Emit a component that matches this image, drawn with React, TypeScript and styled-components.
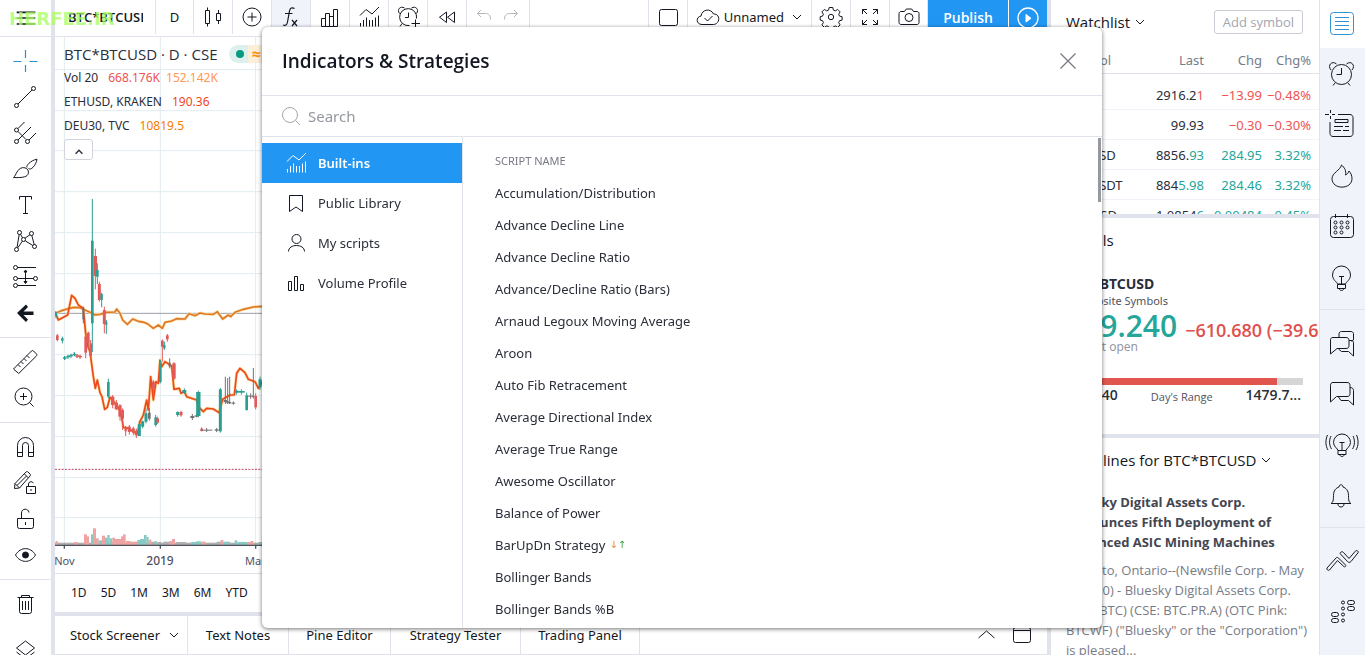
import React from "react";
import styled, { createGlobalStyle, css } from "styled-components";

const font = `"Noto Sans", "Open Sans", "Liberation Sans", sans-serif`;
const headFont = `"Open Sans", "Noto Sans", "Liberation Sans", sans-serif`;
const c = {
  ink: "#131722",
  text: "#2a2e39",
  muted: "#787b86",
  line: "#e0e3eb",
  blue: "#2196f3",
  up: "#26a69a",
  down: "#ef5350",
  rail: "#f0f3fa",
};

const GlobalStyle = createGlobalStyle`
  *, *::before, *::after { box-sizing: border-box; }
  html, body, #root { height: 100%; }
  body { margin: 0; overflow: hidden; background: #fff; color: ${c.text}; font: 13px/20px ${font}; }
  button, input { font: inherit; color: inherit; border: 0; background: none; padding: 0; margin: 0; }
  button { cursor: pointer; }
  h2, h3, p, ul { margin: 0; padding: 0; font-weight: 400; }
  ul { list-style: none; }
`;

/* ---------- icons ---------- */

const Svg = styled.svg.attrs({ viewBox: "0 0 28 28", "aria-hidden": true })<{ $size?: number }>`
  display: block;
  flex: none;
  width: ${(p) => p.$size ?? 28}px;
  height: ${(p) => p.$size ?? 28}px;
  fill: none;
  stroke: currentColor;
  stroke-width: 1;
`;

const icons = {
  menu: <path strokeWidth="1.8" d="M4 8h20M4 14h20M4 20.500h20" />,
  cross: <path stroke="#2a8fd0" strokeWidth="1.200" d="M14.500 3v8M14.500 18v7M2.500 14.500h8M18.500 14.500h8" />,
  trend: (
    <>
      <circle cx="5.500" cy="22.500" r="2" />
      <circle cx="22.500" cy="5.500" r="2" />
      <path d="M7 21 21 7" />
    </>
  ),
  fork: (
    <>
      <circle cx="5.500" cy="11" r="2" />
      <circle cx="5.500" cy="22.500" r="2" />
      <circle cx="16.500" cy="22.500" r="2" />
      <path d="M7 9.500 13.500 3M7 21 20 8M18 21l7-7M7 12.500l8 8" />
    </>
  ),
  brush: (
    <path d="M2.500 22.500C5.500 20 6 13.500 11.500 12.700c3.800-.5 6.600 2.300 5.800 5.600-.8 3.600-5 4.600-14.800 4.200zM16 12.500c-.5-1 .2-2.500 1.700-4C20 6.500 22.500 4.800 26 4.200M17.500 13.500c1 1 3 .5 4.500-1.200 2-2 3.500-5 4-8" />
  ),
  text: <path d="M8.500 8.500v-3h12v3M14.500 5.500v17M12 22.500h5" />,
  pattern: (
    <>
      <circle cx="8.500" cy="5.500" r="2" />
      <circle cx="20.500" cy="6.500" r="2" />
      <circle cx="12.500" cy="12.500" r="2" />
      <circle cx="5.500" cy="22.500" r="2" />
      <circle cx="23.500" cy="19.500" r="2" />
      <path d="M8.200 7.500 6 20.500M9.500 7.200l2 3.600M14 11.200l5-3.500M11.300 14.200 6.800 20.800M14.200 13.800l7.700 4.700M20.800 8.500l2.400 9" />
    </>
  ),
  forecast: (
    <>
      <circle cx="4.500" cy="4.500" r="2" />
      <circle cx="4.500" cy="15.500" r="2" />
      <circle cx="24.500" cy="15.500" r="2" />
      <circle cx="4.500" cy="22.500" r="2" />
      <path d="M6.500 4.500H25M6.500 15.500h16M6.500 22.500H25M14.500 8v12" />
      <path fill="currentColor" d="m13 9 1.500-2 1.500 2zM13 18.500l1.500 2 1.500-2z" />
    </>
  ),
  back: <path stroke="none" fill="currentColor" d="m6 14 9-8.500 2 2.500-4.500 4.500h10v3.500h-10L17 20.500 15 23z" />,
  ruler: <path d="M2.500 21 20.500 3c.7-.7 1.500-.7 2 0l3 3c.5.5.5 1.200 0 1.900L7.700 25.500zM7 16.500l2.500 2.500M10 13.500l2.500 2.500M13 10.500l2.500 2.500M16 7.500l2.500 2.500" />,
  zoom: (
    <>
      <circle cx="12.500" cy="12.500" r="8.500" />
      <path d="m18.500 18.500 4 4M12.500 9v7M9 12.500h7" />
    </>
  ),
  magnet: <path d="M6.500 23.500v-11a8 8 0 0 1 16 0v11h-5v-11a3 3 0 0 0-6 0v11zM6.500 19.500h5M17.500 19.500h5" />,
  pencil: (
    <>
      <path d="m3.500 19.500.5-5L15 3c.6-.6 1.300-.6 2 0l2 2c.6.600.600 1.300 0 2L8.500 19zM4 14.500 8.500 19M13.500 5l4 4M6 16.500 15.500 7" />
      <path d="M15.500 17.500h9v7h-9zM17.500 17.500V15a2.500 2.500 0 0 1 4.800-.8M20 20v2" />
    </>
  ),
  lock: <path d="M6.500 13.500h16v8a2 2 0 0 1-2 2h-12a2 2 0 0 1-2-2zM10.500 13.500V8c0-5 7-5 7.500-.5M14.500 17v3" />,
  eye: (
    <>
      <path d="M4.500 14c5-8.500 15-8.500 20 0-5 8.500-15 8.500-20 0z" />
      <circle cx="14.500" cy="14" r="3" fill="currentColor" />
    </>
  ),
  trash: <path d="M8.500 7.500h12v14a2 2 0 0 1-2 2h-8a2 2 0 0 1-2-2zM6.500 7.500h16M10.500 7V5.500h8V7M11.500 11v9M14.500 11v9M17.500 11v9" />,
  layers: <path d="m14.500 6 9 7-9 7-9-7zM5.500 17l9 7 9-7" />,
  candles: <path d="M6.500 7.500h4v13h-4zM8.500 4.500v3M8.500 20.500v3M17.500 10.500h4v7h-4zM19.500 7v3.500M19.500 17.500V21" />,
  plus: (
    <>
      <circle cx="14" cy="14" r="9" />
      <path d="M14 9.500v9M9.500 14h9" />
    </>
  ),
  fx: <path strokeWidth="1.200" d="M17.500 5.500c-2.500-1.500-4.500-.5-5 2.500l-2 11c-.5 3-2 4-4.500 3M8 10.500h7.500M15 17l5 6M20 17l-5 6" />,
  bars: <path d="M5.500 15.500h4v8h-4zM9.500 10.500h4v13h-4zM13.500 13.500h4v10h-4zM17.500 6.500h4v17h-4z" />,
  indicator: (
    <path d="m5 12.500 6-6 6 4.500 7-7M5.500 20v3.500M8.500 17v6.500M11.500 14.500v9M14.500 17v6.500M17.500 17v6.500M20.500 14.500v9M23.500 12.500v11" />
  ),
  alarmPlus: (
    <path d="M22.500 15.500a8.500 8.500 0 1 0-7 7M14.500 9.500v5H11M5.500 10.500c-3-4 1-8 5-5.500M22.500 10.500c3-4-1-8-5-5.500M17.500 20.500h8.500M21.500 16.500v8M8 20.500l-2 3" />
  ),
  replay: <path d="M13.500 9v10.500L6.500 14.200zM21.500 9v10.500l-7-5.300z" />,
  undo: <path d="M7.500 10.500h8c3.500 0 5 2 5 6M11 7l-3.500 3.500L11 14" />,
  redo: <path d="M19.500 10.500h-8c-3.500 0-5 2-5 6M16 7l3.500 3.500L16 14" />,
  frame: <rect x="5.500" y="6.500" width="18" height="16" rx="2" />,
  cloud: <path d="M8 21.500c-6 0-6.500-7.500-1-8.500C8 6 17 5 19.500 11c7-.5 7 10 0 10.500zM10.500 15l3 3 5-5" />,
  chevron: <path d="m10 12 4 4 4-4" />,
  gear: (
    <>
      <circle cx="14" cy="14" r="2.700" />
      <path d="M12.200 4.500h3.600l.6 2.600 1.900.8 2.300-1.500 2.500 2.500-1.400 2.300.8 1.900 2.600.6v3.400l-2.600.6-.8 1.900 1.400 2.300-2.500 2.500-2.300-1.400-1.900.8-.6 2.400h-3.600l-.6-2.500-1.900-.8-2.300 1.500-2.500-2.500 1.500-2.300-.8-1.900-2.400-.6v-3.400l2.400-.6.8-1.900-1.500-2.300 2.500-2.500 2.300 1.500 1.900-.8z" />
    </>
  ),
  full: <path d="M6.500 11V6.500H11M6.500 6.500l4.500 4.500M17 6.500h4.500V11M21.500 6.500 17 11M6.500 17v4.500H11M6.500 21.500 11 17M17 21.500h4.500V17M21.500 21.500 17 17" />,
  camera: (
    <>
      <path d="M6 8.500h3.500l1.800-2.500h5.400l1.800 2.500H22c1 0 2 .8 2 2v9c0 1.200-1 2-2 2H6c-1 0-2-.8-2-2v-9c0-1.200 1-2 2-2z" />
      <circle cx="14" cy="14.500" r="4" />
    </>
  ),
  play: (
    <>
      <circle cx="14" cy="14" r="10" strokeWidth="1.300" />
      <path fill="currentColor" d="M12 10.500v7.500l5-3.700z" />
    </>
  ),
  close: <path strokeWidth="1.300" stroke="#787b86" d="m6.500 6.500 15 15M21.500 6.500l-15 15" />,
  search: (
    <>
      <circle cx="13" cy="13" r="7.500" />
      <path d="m18.500 18.500 4.500 4.500" />
    </>
  ),
  bookmark: <path d="M7.500 6.500h13v16l-6.500-4.500-6.500 4.500z" />,
  user: (
    <>
      <circle cx="14.500" cy="10" r="4.500" />
      <path d="M6.500 22.500c0-8 16-8 16 0" />
    </>
  ),
  volume: <path d="M6.500 12.500h3v9h-3zM12.500 7.500h3v14h-3zM18.500 15.500h3v6h-3z" />,
  list: (
    <>
      <rect x="3.500" y="3.500" width="23" height="22" rx="3" />
      <path d="M8 8.500h14M8 12.500h14M8 16.500h14M8 20.500h14" />
    </>
  ),
  alarm: (
    <>
      <circle cx="14.500" cy="14.500" r="10" />
      <path d="M14.500 8v6.500h-5M4 10C0 5.500 5 0 9.500 4M25 10c4-4.500-1-10-5.500-6M8 23l-2 2.500M21 23l2 2.500" />
    </>
  ),
  notes: (
    <>
      <path d="M11 3.500h12c1.700 0 3 1.300 3 3v16c0 1.700-1.300 3-3 3H6c-1.700 0-3-1.300-3-3V11M-2 3.500h4M5 3.500h3M3.500-1v3M3.500 5v3" />
      <path d="M8 8.500h13v3H8zM7 15.500h9M18 15.500h4M7 19.500h7M16 19.500h6" />
    </>
  ),
  flame: <path d="M14.500 3c-1 5-9.500 8-9.500 13.500 0 11.500 20 11.500 20 0 0-3-1.500-6-3-7.500-.7 2-1.500 3-3.500 4 1-4-1-7.500-4-10z" />,
  calendar: (
    <>
      <rect x="3.500" y="3.500" width="23" height="21" rx="3" />
      <path d="M8.500 1v4M20.500 1v4" />
      {[9, 14, 19].map((y) =>
        [8.5, 14.5, 20.5].filter((x) => y < 19 || x < 20).map((x) => <circle key={`${x}-${y}`} cx={x} cy={y + 0.5} r="1.500" />),
      )}
    </>
  ),
  bulb: <path d="M10.500 20c-.3-2-5-4-5-9a9 9 0 0 1 18 0c0 5-4.700 7-5 9zM10.500 20.500h8v4h-8zM12.500 25c0 2 4 2 4 0M12 12.500h5M14.500 12.500V20" />,
  chats: (
    <path d="M12 8V5c0-1.500 1-2.500 2.500-2.500H24c1 0 2.500 1 2.500 2V10c0 1.500-1 2-2.500 2M6 8.500h13c2 0 3 1 3 3v5c0 2-1 3-3 3h-9L3.500 25V10.500c0-1 1-2 2.500-2zM22 11.500h2.500c1 0 2 1 2 2V27l-5-4.500h-7l-3-2.500" />
  ),
  chat: <path d="M6 2.500h14c2 0 3 1 3 3v8c0 2-1 3-3 3H9.500L3.500 22V5.500c0-2 1-3 2.500-3zM23 7.500c2 0 3.500 1 3.500 3V25l-5-4.500H14L11.500 17" />,
  bulbWave: (
    <path d="M11 19.500c-.3-2-4.500-4-4.500-8a8.500 8.500 0 0 1 17 0c0 4-4.200 6-4.500 8zM11 19.500h8v4h-8zM13 24c0 2 4 2 4 0M12.500 11.500h5M15 11.500v8M4 5c-2 4-2 9 .5 13M.5 4C-1.800 9-1.500 15 1 19M26 5c2 4 2 9-.5 13M29.500 4c2.300 5 2 11-.5 15" />
  ),
  bell: <path d="M4 21.500c2-1 2.500-3 2.500-8C6.500 8.500 9 6 12 5c0-3 4-3 4 0 3 1 5.500 3.500 5.500 8.500 0 5 .5 7 2.500 8zM11 22c0 4 6 4 6 0" />,
  zigzag: (
    <path d="m0 21 9-10c.7-.8 1.700-.8 2.500 0l7 7c1 1-.7 2.500-1.700 1.500L10.500 13.500 2.500 23C1.500 24-1 22.500 0 21zM13.500 5.500c1-1 2-1 3 0l5.500 6 6.500-7.500c1-1.500 3.500.5 2.500 1.800L24 14.500c-1 1.200-2.500 1.200-3.500 0l-7-7.500c-.5-.5-.5-1 0-1.500z" />
  ),
  dots: (
    <>
      <rect x="4.500" y="14.500" width="7" height="4" rx="2" />
      <rect x="4.500" y="20.500" width="7" height="4" rx="2" />
      <rect x="20.500" y="2.500" width="7" height="4" rx="2" />
      <rect x="20.500" y="8.500" width="7" height="4" rx="2" />
      <circle cx="16" cy="4.500" r="1.500" />
      <circle cx="16" cy="10.500" r="1.500" />
      <circle cx="16" cy="16.500" r="1.500" />
      <circle cx="16" cy="22.500" r="1.500" />
    </>
  ),
  up: <path d="m6.500 17 8-7 8 7" />,
  upSmall: <path strokeWidth="1.600" d="m10 16 4-4 4 4" />,
  window: <path d="M7.500 6.500h13a2 2 0 0 1 2 2v11a2 2 0 0 1-2 2h-13a2 2 0 0 1-2-2v-11a2 2 0 0 1 2-2zM5.500 9.500h17" />,
};
type IconName = keyof typeof icons;

const Icon = ({ name, size }: { name: IconName; size?: number }) => (
  <Svg $size={size} overflow="visible">
    {icons[name]}
  </Svg>
);

/* ---------- frame ---------- */

const Shell = styled.div`
  display: flex;
  height: 100vh;
  overflow: hidden;
`;

const Divider = styled.div`
  flex: 0 0 4px;
  background: ${c.line};
`;

const Main = styled.main`
  flex: 1;
  min-width: 0;
  display: flex;
  flex-direction: column;
`;

/* ---------- left toolbar ---------- */

const Tools = styled.nav`
  flex: 0 0 51px;
  display: flex;
  flex-direction: column;
  color: ${c.ink};
`;

const MenuButton = styled.button`
  flex: 0 0 37px;
  display: grid;
  place-items: center;
  border-bottom: 1px solid ${c.line};
`;

const ToolGroup = styled.div`
  padding: 6px 0;
  border-bottom: 1px solid ${c.line};
  &:last-child { border: 0; }
`;

const ToolButton = styled.button<{ $gap?: boolean }>`
  display: flex;
  align-items: center;
  justify-content: center;
  width: 100%;
  height: 36px;
  margin-top: ${(p) => (p.$gap ? 9 : 0)}px;
  padding-right: 2px;
`;

const toolGroups: [IconName, string][][] = [
  [["cross", "Cross"], ["trend", "Trend line"], ["fork", "Pitchfork"], ["brush", "Brush"], ["text", "Text"], ["pattern", "Patterns"], ["forecast", "Prediction"], ["back", "Hide"]],
  [["ruler", "Measure"], ["zoom", "Zoom in"]],
  [["magnet", "Magnet"], ["pencil", "Stay in drawing mode"], ["lock", "Lock drawings"], ["eye", "Hide drawings"]],
  [["trash", "Remove"], ["layers", "Object tree"]],
];

/* ---------- top bar ---------- */

const TopBar = styled.header`
  flex: 0 0 37px;
  display: flex;
  border-bottom: 1px solid ${c.line};
  color: ${c.ink};
`;

const TopButton = styled.button<{ $width?: number; $active?: boolean }>`
  flex: 0 0 ${(p) => p.$width ?? 39}px;
  height: 34px;
  display: flex;
  align-items: center;
  justify-content: center;
  border-right: 1px solid ${c.line};
  background: ${(p) => (p.$active ? c.rail : "none")};
`;

const SymbolButton = styled(TopButton)`
  justify-content: flex-start;
  padding-left: 13px;
  font-family: ${headFont};
  font-size: 13px;
  font-weight: 600;
  span { width: 75px; overflow: hidden; white-space: nowrap; text-align: left; }
`;

const History = styled.div`
  flex: 0 0 63px;
  display: flex;
  align-items: center;
  justify-content: center;
  height: 34px;
  color: #b2b5be;
  border-right: 1px solid ${c.line};
`;

const TopRight = styled.div`
  margin-left: auto;
  display: flex;
  border-left: 1px solid ${c.line};
`;

const LayoutButton = styled(TopButton)`
  justify-content: flex-start;
  gap: 2px;
  padding-left: 6px;
  svg:last-child { margin-left: -3px; }
`;

const Publish = styled.button<{ $width: number }>`
  width: ${(p) => p.$width}px;
  height: 36px;
  display: flex;
  align-items: center;
  justify-content: center;
  background: ${c.blue};
  color: #fff;
  font-family: ${headFont};
  font-size: 14px;
  font-weight: 600;
  border-right: 1px solid #fff;
  &:last-child { border: 0; }
`;

/* ---------- chart ---------- */

const ChartArea = styled.section`
  flex: 1;
  min-height: 0;
  position: relative;
  overflow: hidden;
`;

const ChartSvg = styled.svg`
  display: block;
  width: 992px;
  height: 536px;
`;

const Legend = styled.div`
  position: absolute;
  left: 9px;
  top: 5px;
  font-size: 12px;
  line-height: 24px;
`;

const LegendTitle = styled.div`
  display: flex;
  align-items: center;
  gap: 12px;
  font-family: ${headFont};
  font-size: 15px;
`;

const Status = styled.span`
  display: flex;
  align-items: center;
  width: 52px;
  height: 18px;
  padding-left: 7px;
  gap: 7px;
  border-radius: 9px;
  color: #f7931a;
  font-size: 16px;
  font-weight: 700;
  background: linear-gradient(90deg, #dcf1ee 19px, #fdeed9 19px);
  &::before { content: ""; width: 8px; height: 8px; border-radius: 50%; background: #089981; }
`;

const LegendRow = styled.div`
  display: flex;
  gap: 6px;
`;

const Val = styled.span<{ $color: string; $gap?: boolean }>`
  color: ${(p) => p.$color};
  margin-left: ${(p) => (p.$gap ? 4 : 0)}px;
`;

const Collapse = styled.button`
  display: grid;
  place-items: center;
  width: 29px;
  height: 21px;
  margin-top: 1px;
  background: #fff;
  border: 1px solid #d1d4dc;
  border-radius: 3px;
`;

const G = "#2b9e92";
const R = "#e25a58";
const N = "#73706f";

// Chart geometry is kept in thirds of a pixel.
const deuLine =
  "165,940 185,932 205,926 222,922 240,923 255,930 270,937 285,945 300,943 320,937 345,936 350,927 360,940 368,960 382,973 398,957 415,964 432,967 445,973 460,985 475,975 487,985 495,967 515,963 530,956 555,957 567,941 585,947 600,939 615,942 640,943 652,935 668,957 685,945 692,950 705,937 730,928 760,921 790,919";
const ethLine =
  "165,935 175,960 203,945 215,886 225,895 235,915 250,925 258,1010 264,1040 270,1055 280,1130 286,1165 292,1140 300,1178 306,1190 314,1228 322,1222 330,1192 345,1210 362,1235 370,1282 385,1285 400,1295 412,1302 420,1265 430,1245 440,1200 445,1230 452,1130 460,1200 468,1145 475,1150 480,1080 485,1100 495,1085 515,1098 522,1168 538,1165 543,1180 553,1175 560,1190 590,1200 595,1220 610,1235 620,1225 640,1227 657,1238 668,1198 690,1185 703,1185 710,1120 720,1105 735,1118 745,1138 765,1145 775,1165 790,1140";

// x, wick top, wick bottom, body top, body bottom, colour, body width
type Candle = [number, number, number, number, number, string, number];
const candles: Candle[] = [
  [168, 935, 955, 938, 948, G, 6],
  [172, 1002, 1024, 1006, 1020, R, 8],
  [187, 1010, 1030, 1015, 1022, G, 8],
  [250, 920, 970, 925, 958, N, 6],
  [257, 1000, 1075, 1010, 1058, R, 8],
  [265, 995, 1050, 998, 1030, R, 8],
  [272, 1020, 1070, 1030, 1068, R, 8],
  [277, 597, 1056, 722, 970, G, 8],
  [286, 746, 868, 768, 828, R, 10],
  [292, 790, 852, 810, 830, G, 8],
  [298, 845, 905, 852, 900, R, 9],
  [305, 878, 922, 882, 900, G, 7],
  [313, 920, 1000, 930, 972, R, 9],
  [319, 960, 1002, 965, 975, G, 6],
  [325, 1136, 1195, 1146, 1190, G, 8],
  [338, 1185, 1225, 1190, 1215, R, 10],
  [349, 1200, 1230, 1208, 1228, R, 10],
  [360, 1212, 1262, 1216, 1250, R, 10],
  [368, 1225, 1290, 1230, 1256, R, 8],
  [377, 1278, 1308, 1282, 1294, R, 7],
  [388, 1275, 1304, 1280, 1296, R, 9],
  [400, 1280, 1306, 1285, 1298, R, 9],
  [409, 1286, 1314, 1292, 1306, R, 9],
  [418, 1262, 1308, 1272, 1308, G, 9],
  [428, 1262, 1285, 1264, 1280, G, 9],
  [438, 1225, 1270, 1240, 1265, G, 9],
  [448, 1224, 1262, 1238, 1256, N, 8],
  [467, 1245, 1280, 1252, 1275, G, 8],
  [473, 1250, 1272, 1255, 1268, R, 8],
  [460, 1140, 1190, 1145, 1165, R, 9],
  [481, 1080, 1150, 1095, 1146, G, 8],
  [487, 1018, 1085, 1022, 1040, R, 8],
  [493, 1025, 1050, 1035, 1045, G, 7],
  [502, 1002, 1025, 1006, 1018, R, 8],
  [509, 1075, 1105, 1088, 1100, N, 6],
  [522, 1086, 1140, 1090, 1136, R, 10],
  [533, 1234, 1250, 1236, 1245, G, 9],
  [543, 1232, 1250, 1236, 1246, R, 9],
  [553, 1165, 1182, 1170, 1178, G, 12],
  [577, 1242, 1260, 1248, 1254, N, 12],
  [590, 1240, 1252, 1246, 1250, N, 12],
  [595, 1172, 1252, 1176, 1248, G, 13],
  [605, 1282, 1294, 1286, 1293, R, 8],
  [620, 1284, 1296, 1289, 1292, N, 34],
  [650, 1284, 1296, 1288, 1292, N, 12],
  [661, 1164, 1298, 1168, 1294, G, 9],
  [676, 1130, 1212, 1200, 1206, N, 10],
  [683, 1134, 1212, 1204, 1209, N, 8],
  [689, 1130, 1212, 1206, 1210, N, 8],
  [700, 1204, 1214, 1208, 1211, N, 12],
  [710, 1168, 1184, 1172, 1178, G, 10],
  [724, 1168, 1184, 1173, 1178, G, 20],
  [740, 1178, 1232, 1186, 1230, G, 8],
  [752, 1180, 1196, 1187, 1190, N, 18],
  [760, 1104, 1196, 1187, 1190, N, 6],
  [767, 1180, 1228, 1188, 1222, R, 8],
  [780, 1130, 1170, 1138, 1162, G, 9],
];

const shelf: [number, number, string][] = [
  [194, 1074, G], [204, 1070, G], [213, 1067, G], [223, 1063, G], [231, 1068, R], [240, 1070, R],
];

// x, height, colour, width
const volumes: [number, number, string, number][] = [
  [167, 12, R, 6], [222, 9, R, 10], [252, 32, R, 9], [261, 26, R, 6], [273, 32, G, 6], [279, 50, R, 9], [288, 20, R, 8],
  [296, 14, G, 10], [306, 28, R, 9], [315, 22, G, 8], [322, 30, G, 7], [329, 20, G, 8], [337, 22, R, 8], [345, 18, R, 18],
  [363, 26, R, 6], [369, 32, R, 8], [378, 12, R, 14], [392, 10, R, 20], [412, 15, G, 8], [420, 18, G, 12], [432, 30, G, 8],
  [440, 24, G, 6], [446, 16, R, 8], [454, 10, N, 10], [464, 12, G, 6], [472, 9, N, 12], [490, 10, N, 18], [508, 12, R, 8],
  [516, 18, R, 9], [528, 9, N, 30], [574, 9, G, 14], [588, 11, G, 16], [604, 10, R, 12], [650, 10, N, 12], [662, 15, R, 8],
  [670, 10, G, 20], [704, 14, G, 8], [714, 9, G, 28], [742, 9, R, 10], [752, 12, R, 8], [776, 9, G, 14],
];

const Chart = () => (
  <ChartSvg viewBox="165 111 2976 1608" role="img" aria-label="BTC*BTCUSD price chart">
    <g stroke="#e1ebef" strokeWidth="3">
      {[209, 332, 452, 575, 698, 821, 1064, 1187, 1310, 1433, 1553].map((y) => (
        <path key={y} d={`M165 ${y}H3141`} />
      ))}
      {[193, 481, 767].map((x) => (
        <path key={x} d={`M${x} 111V1636`} />
      ))}
    </g>
    <path stroke="#9b9ea6" strokeWidth="3" d="M165 940H3141" />
    <path stroke="#c2415a" strokeWidth="3" strokeDasharray="6 4" d="M165 1408H3141" />
    <g opacity=".55">
      <rect x="165" y="1628" width="640" height="7" fill={N} />
      {volumes.map(([x, h, fill, w]) => (
        <rect key={x} x={x} y={1635 - h} width={w} height={h} fill={fill} />
      ))}
    </g>
    <g fill="none" strokeLinejoin="round">
      <polyline points={ethLine} stroke="#ffd9a0" strokeWidth="9" />
      <polyline points={deuLine} stroke="#ffdfa8" strokeWidth="9" />
      <polyline points={deuLine} stroke="#dd7a2a" strokeWidth="5" />
      <polyline points={ethLine} stroke="#ea4a1c" strokeWidth="5" />
    </g>
    {shelf.map(([x, y, fill]) => (
      <path key={x} fill={fill} d={`M${x - 5} ${y - 2}h3v-4h4v4h4v4h-4v4h-4v-4h-3z`} />
    ))}
    {candles.map(([x, t, b, bt, bb, color, w]) => (
      <g key={`${x}-${t}`} fill={color}>
        <rect x={x - 1.5} y={t} width="3" height={b - t} />
        <rect x={x - w / 2} y={bt} width={w} height={bb - bt} />
      </g>
    ))}
    <path stroke="#50535e" strokeWidth="4" d="M165 1636H3141M193 1636v10M481 1636v10M767 1636v10" />
    <g fill="#50535e" fontSize="33" textAnchor="middle">
      <text x="193" y="1694">Nov</text>
      <text x="480" y="1694" fontSize="36" fontWeight="500">2019</text>
      <text x="766" y="1694">Mar</text>
    </g>
  </ChartSvg>
);

const Ranges = styled.div`
  flex: 0 0 39px;
  display: flex;
  align-items: center;
  gap: 14px;
  padding-left: 16px;
  border-top: 1px solid ${c.line};
  color: ${c.ink};
  font-size: 12px;
`;

const HDivider = styled.div`
  flex: 0 0 4px;
  background: ${c.line};
`;

const Tabs = styled.footer`
  flex: 0 0 39px;
  display: flex;
  border-bottom: 1px solid ${c.line};
  color: ${c.ink};
`;

const Tab = styled.button<{ $width: number }>`
  flex: 0 0 ${(p) => p.$width}px;
  display: flex;
  align-items: center;
  justify-content: center;
  border-right: 1px solid ${c.line};
  svg { margin-right: -16px; }
`;

const TabActions = styled.div`
  margin-left: auto;
  display: flex;
  align-items: center;
  gap: 8px;
  padding-right: 11px;
`;

/* ---------- side panel ---------- */

const Side = styled.aside`
  flex: 0 0 269px;
  min-width: 0;
  display: flex;
  flex-direction: column;
  border-right: 1px solid ${c.line};
`;

const Widget = styled.section<{ $height?: number }>`
  ${(p) => (p.$height ? css`flex: 0 0 ${p.$height}px;` : css`flex: 1;`)}
  min-height: 0;
  overflow: hidden;
`;

const WidgetHead = styled.div`
  display: flex;
  align-items: center;
  height: 46px;
  padding: 0 16px 2px 15px;
  color: ${c.ink};
  font-family: ${headFont};
  font-size: 15px;
`;

const HeadButton = styled.button`
  display: flex;
  align-items: center;
  white-space: nowrap;
  svg { margin-left: -4px; }
`;

const AddSymbol = styled.input`
  width: 89px;
  height: 24px;
  margin-left: auto;
  border: 1px solid #c9ccd4;
  border-radius: 3px;
  font-size: 13px;
  text-align: center;
  &::placeholder { color: #a3a6af; opacity: 1; }
`;

const Quotes = styled.table`
  width: 100%;
  table-layout: fixed;
  border-collapse: separate;
  border-spacing: 0;
  th, td { padding: 0; text-align: right; font-weight: 400; }
  th:first-child, td:first-child { text-align: left; padding-left: 15px; width: 82px; }
  th:nth-child(2) { width: 71px; }
  th:nth-child(3) { width: 58px; }
  th:last-child, td:last-child { padding-right: 8px; }
  th { height: 28px; color: ${c.muted}; border-bottom: 1px solid ${c.line}; }
  td { height: 30px; border-bottom: 1px solid #f0f3fa; }
  tbody::before { content: ""; display: block; height: 6px; }
`;

const Tone = styled.span<{ $up: boolean }>`
  color: ${(p) => (p.$up ? c.up : c.down)};
`;

const quotes: [string, string, string, string, string, boolean][] = [
  ["SPX", "2916.2", "1", "−13.99", "−0.48%", false],
  ["DXY", "99.93", "", "−0.30", "−0.30%", false],
  ["BTCUSD", "8856.", "93", "284.95", "3.32%", true],
  ["BTCUSDT", "884", "5.98", "284.46", "3.32%", true],
  ["EURUSD", "1.0854", "6", "0.00484", "0.45%", true],
];

const Details = styled.div`
  padding: 10px 0 0 15px;
  white-space: nowrap;
`;

const DetailSymbol = styled.h3`
  font-size: 14px;
  font-weight: 700;
`;

const Small = styled.p<{ $light?: boolean }>`
  font-size: ${(p) => (p.$light ? 12 : 11)}px;
  line-height: 14px;
  color: ${(p) => (p.$light ? "#9598a1" : "#50535e")};
`;

const PriceRow = styled.div`
  display: flex;
  align-items: baseline;
  gap: 8px;
  margin-top: 4px;
  font-family: ${headFont};
  font-size: 18px;
  font-weight: 600;
  color: #e0504d;
`;

const Price = styled.span`
  font-size: 30px;
  line-height: 28px;
  color: ${c.up};
`;

const RangeBar = styled.div`
  width: 237px;
  height: 7px;
  margin-top: 24px;
  background: linear-gradient(90deg, #e25650 211px, #d6d6d6 211px);
`;

const RangeRow = styled.div`
  display: flex;
  justify-content: space-between;
  width: 235px;
  font-family: ${headFont};
  font-size: 14px;
  font-weight: 600;
  ${Small} { font-weight: 400; line-height: 24px; }
`;

const News = styled.article`
  padding: 8px 0 0 15px;
  white-space: nowrap;
  color: #787b86;
  font-family: ${headFont};
`;

const NewsTitle = styled.h3`
  margin-bottom: 8px;
  font-size: 13px;
  font-weight: 700;
  color: #434651;
`;

/* ---------- right rail ---------- */

const Rail = styled.nav`
  flex: 0 0 45px;
  display: flex;
  flex-direction: column;
  background: ${c.rail};
  color: ${c.ink};
`;

const RailGroup = styled.div`
  padding-bottom: 6px;
  & + & { border-top: 1px solid ${c.line}; padding-top: 7px; }
`;

const RailButton = styled.button<{ $active?: boolean }>`
  display: flex;
  align-items: center;
  justify-content: center;
  width: 100%;
  height: 51px;
  padding-right: 3px;
  ${(p) => p.$active && css`height: 48px; padding-bottom: 2px; background: #fff; color: #3293cf;`}
`;

const railGroups: [IconName, string][][] = [
  [["list", "Watchlist"], ["alarm", "Alerts"], ["notes", "Notes"], ["flame", "Hotlists"], ["calendar", "Calendar"], ["bulb", "My ideas"]],
  [["chats", "Public chats"], ["chat", "Private chats"], ["bulbWave", "Ideas stream"], ["bell", "Notifications"]],
  [["zigzag", "Order panel"], ["dots", "DOM"]],
];

/* ---------- dialog ---------- */

const Overlay = styled.div`
  position: fixed;
  inset: 0;
  z-index: 2;
  display: flex;
  align-items: center;
  justify-content: center;
  padding-right: 1px;
`;

const Dialog = styled.div`
  width: 840px;
  height: calc(100vh - 54px);
  display: flex;
  flex-direction: column;
  overflow: hidden;
  background: #fff;
  border-radius: 6px;
  box-shadow: 0 1px 4px rgba(0, 0, 0, 0.55);
`;

const DialogHead = styled.div`
  flex: 0 0 69px;
  display: flex;
  align-items: center;
  justify-content: space-between;
  padding: 0 20px;
  border-bottom: 1px solid ${c.line};
  color: ${c.ink};
  h2 { font-family: ${headFont}; font-size: 19px; font-weight: 600; }
`;

const SearchRow = styled.label`
  flex: 0 0 41px;
  display: flex;
  align-items: center;
  gap: 3px;
  padding-left: 15px;
  border-bottom: 1px solid ${c.line};
  color: #a3a6af;
  input { flex: 1; outline: 0; color: ${c.ink}; font-size: 15px; }
  input::placeholder { color: #9598a1; opacity: 1; }
`;

const DialogBody = styled.div`
  flex: 1;
  min-height: 0;
  display: flex;
  position: relative;
`;

const Categories = styled.nav`
  flex: 0 0 201px;
  padding-top: 6px;
  border-right: 1px solid ${c.line};
`;

const Category = styled.button<{ $active?: boolean }>`
  display: flex;
  align-items: center;
  gap: 8px;
  width: 100%;
  height: 40px;
  padding-left: 20px;
  ${(p) => p.$active && css`background: ${c.blue}; color: #fff; font-weight: 600;`}
  svg { color: ${(p) => (p.$active ? "#fff" : c.ink)}; }
`;

const Scripts = styled.div`
  flex: 1;
  padding: 8px 32px 0;
  overflow: hidden;
`;

const ScriptHead = styled.div`
  font-size: 11px;
  line-height: 32px;
  color: ${c.muted};
`;

const Script = styled.li`
  display: flex;
  align-items: center;
  height: 32px;
`;

const Arrow = styled.span<{ $color: string }>`
  color: ${(p) => p.$color};
  font-family: "DejaVu Sans", sans-serif;
  font-size: 10px;
  &:first-of-type { margin-left: 4px; }
`;

const Thumb = styled.div`
  position: absolute;
  top: 1px;
  right: 1px;
  width: 3px;
  height: 64px;
  background: #9598a1;
`;

const Watermark = styled.div`
  position: fixed;
  left: 9px;
  top: 7px;
  z-index: 3;
  pointer-events: none;
  font: 700 18px/24px "DejaVu Sans", sans-serif;
  color: rgba(165, 255, 95, 0.75);
`;

const scripts = [
  "Accumulation/Distribution", "Advance Decline Line", "Advance Decline Ratio", "Advance/Decline Ratio (Bars)",
  "Arnaud Legoux Moving Average", "Aroon", "Auto Fib Retracement", "Average Directional Index", "Average True Range",
  "Awesome Oscillator", "Balance of Power", "BarUpDn Strategy", "Bollinger Bands", "Bollinger Bands %B",
];

const categories: [IconName, string][] = [
  ["indicator", "Built-ins"], ["bookmark", "Public Library"], ["user", "My scripts"], ["volume", "Volume Profile"],
];

const topIcons: [IconName, string][] = [
  ["candles", "Candles"], ["plus", "Compare"], ["fx", "Indicators"], ["bars", "Financials"],
  ["indicator", "Templates"], ["alarmPlus", "Alert"], ["replay", "Replay"],
];

export default function App() {
  return (
    <>
      <GlobalStyle />
      <Shell>
        <Tools aria-label="Drawing tools">
          <MenuButton aria-label="Menu"><Icon name="menu" size={26} /></MenuButton>
          {toolGroups.map((group, i) => (
            <ToolGroup key={i}>
              {group.map(([name, label]) => (
                <ToolButton key={name} aria-label={label} $gap={name === "layers"}>
                  <Icon name={name} />
                </ToolButton>
              ))}
            </ToolGroup>
          ))}
        </Tools>
        <Divider />
        <Main>
          <TopBar>
            <SymbolButton $width={101}><span>BTC*BTCUSD</span></SymbolButton>
            <TopButton $width={38}>D</TopButton>
            {topIcons.map(([name, label]) => (
              <TopButton key={name} aria-label={label} $active={name === "fx"}>
                <Icon name={name} />
              </TopButton>
            ))}
            <History>
              <button aria-label="Undo"><Icon name="undo" /></button>
              <button aria-label="Redo"><Icon name="redo" /></button>
            </History>
            <TopRight>
              <TopButton aria-label="Layout"><Icon name="frame" /></TopButton>
              <LayoutButton $width={121}><Icon name="cloud" />Unnamed<Icon name="chevron" /></LayoutButton>
              <TopButton aria-label="Settings"><Icon name="gear" /></TopButton>
              <TopButton aria-label="Fullscreen"><Icon name="full" /></TopButton>
              <TopButton aria-label="Snapshot" $width={38}><Icon name="camera" /></TopButton>
              <Publish $width={81}>Publish</Publish>
              <Publish $width={38} aria-label="Stream"><Icon name="play" /></Publish>
            </TopRight>
          </TopBar>
          <ChartArea>
            <Chart />
            <Legend>
              <LegendTitle>BTC*BTCUSD · D · CSE<Status>≈</Status></LegendTitle>
              <LegendRow>Vol 20 <Val $color="#ef5350" $gap>668.176K</Val><Val $color="#ff9850">152.142K</Val></LegendRow>
              <LegendRow>ETHUSD, KRAKEN <Val $color="#f0451c" $gap>190.36</Val></LegendRow>
              <LegendRow>DEU30, TVC <Val $color="#f57c00" $gap>10819.5</Val></LegendRow>
              <Collapse aria-label="Collapse legend"><Icon name="upSmall" size={24} /></Collapse>
            </Legend>
          </ChartArea>
          <Ranges>
            {["1D", "5D", "1M", "3M", "6M", "YTD"].map((r) => <button key={r}>{r}</button>)}
          </Ranges>
          <HDivider />
          <Tabs>
            <Tab $width={133}>Stock Screener<Icon name="chevron" /></Tab>
            <Tab $width={101}>Text Notes</Tab>
            <Tab $width={102}>Pine Editor</Tab>
            <Tab $width={130}>Strategy Tester</Tab>
            <Tab $width={119}>Trading Panel</Tab>
            <TabActions>
              <button aria-label="Open panel"><Icon name="up" /></button>
              <button aria-label="Maximize panel"><Icon name="window" /></button>
            </TabActions>
          </Tabs>
        </Main>
        <Divider />
        <Side>
          <Widget $height={214}>
            <WidgetHead>
              <HeadButton>Watchlist<Icon name="chevron" /></HeadButton>
              <AddSymbol placeholder="Add symbol" aria-label="Add symbol" />
            </WidgetHead>
            <Quotes>
              <thead>
                <tr><th>Symbol</th><th>Last</th><th>Chg</th><th>Chg%</th></tr>
              </thead>
              <tbody>
                {quotes.map(([sym, last, tick, chg, pct, up]) => (
                  <tr key={sym}>
                    <td>{sym}</td>
                    <td>{last}<Tone $up={up}>{tick}</Tone></td>
                    <td><Tone $up={up}>{chg}</Tone></td>
                    <td><Tone $up={up}>{pct}</Tone></td>
                  </tr>
                ))}
              </tbody>
            </Quotes>
          </Widget>
          <HDivider />
          <Widget $height={216}>
            <WidgetHead>Details</WidgetHead>
            <Details>
              <DetailSymbol>BTC*BTCUSD</DetailSymbol>
              <Small>Composite Symbols</Small>
              <PriceRow><Price>929.240</Price>−610.680 (−39.66%)</PriceRow>
              <Small $light>Market open</Small>
              <RangeBar />
              <RangeRow><span>904.640</span><Small>Day's Range</Small><span>1479.7...</span></RangeRow>
            </Details>
          </Widget>
          <HDivider />
          <Widget>
            <WidgetHead>
              <HeadButton>Headlines for BTC*BTCUSD<Icon name="chevron" /></HeadButton>
            </WidgetHead>
            <News>
              <NewsTitle>Bluesky Digital Assets Corp.<br />Announces Fifth Deployment of<br />Enhanced ASIC Mining Machines</NewsTitle>
              <p>
                Toronto, Ontario--(Newsfile Corp. - May<br />
                4, 2020) - Bluesky Digital Assets Corp.<br />
                (CSE: BTC) (CSE: BTC.PR.A) (OTC Pink:<br />
                BTCWF) ("Bluesky" or the "Corporation")<br />
                is pleased...
              </p>
            </News>
          </Widget>
        </Side>
        <Rail aria-label="Widgets">
          {railGroups.map((group, i) => (
            <RailGroup key={i}>
              {group.map(([name, label]) => (
                <RailButton key={name} aria-label={label} $active={name === "list"}>
                  <Icon name={name} />
                </RailButton>
              ))}
            </RailGroup>
          ))}
        </Rail>
      </Shell>
      <Overlay>
        <Dialog role="dialog" aria-labelledby="dialog-title">
          <DialogHead>
            <h2 id="dialog-title">Indicators &amp; Strategies</h2>
            <button aria-label="Close"><Icon name="close" /></button>
          </DialogHead>
          <SearchRow>
            <Icon name="search" />
            <input placeholder="Search" aria-label="Search" />
          </SearchRow>
          <DialogBody>
            <Categories>
              {categories.map(([icon, label]) => (
                <Category key={label} $active={label === "Built-ins"}>
                  <Icon name={icon} />
                  {label}
                </Category>
              ))}
            </Categories>
            <Scripts>
              <ScriptHead>SCRIPT NAME</ScriptHead>
              <ul>
                {scripts.map((s) => (
                  <Script key={s}>
                    {s}
                    {s === "BarUpDn Strategy" && <><Arrow $color="#e8862e">↓</Arrow><Arrow $color="#43a047">↑</Arrow></>}
                  </Script>
                ))}
              </ul>
            </Scripts>
            <Thumb />
          </DialogBody>
        </Dialog>
      </Overlay>
      <Watermark>HERFEE.IR</Watermark>
    </>
  );
}
